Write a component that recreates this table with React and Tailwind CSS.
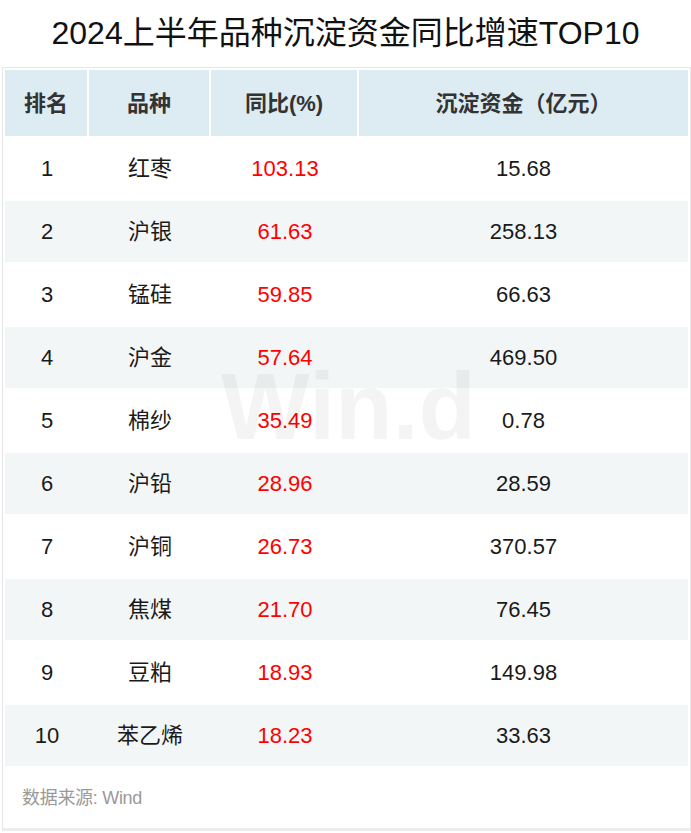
import React from 'react';

// 2024上半年品种沉淀资金同比增速TOP10
const rows = [
  { rank: 1, name: '红枣', yoy: '103.13', fund: '15.68' },
  { rank: 2, name: '沪银', yoy: '61.63', fund: '258.13' },
  { rank: 3, name: '锰硅', yoy: '59.85', fund: '66.63' },
  { rank: 4, name: '沪金', yoy: '57.64', fund: '469.50' },
  { rank: 5, name: '棉纱', yoy: '35.49', fund: '0.78' },
  { rank: 6, name: '沪铅', yoy: '28.96', fund: '28.59' },
  { rank: 7, name: '沪铜', yoy: '26.73', fund: '370.57' },
  { rank: 8, name: '焦煤', yoy: '21.70', fund: '76.45' },
  { rank: 9, name: '豆粕', yoy: '18.93', fund: '149.98' },
  { rank: 10, name: '苯乙烯', yoy: '18.23', fund: '33.63' },
];

const font = { fontFamily: '"Liberation Sans", "Noto Sans CJK SC", sans-serif' };

const App = () => {
  return (
    <div className="w-[691px] h-[833px] bg-white overflow-hidden" style={font}>
      <h1 className="h-[67px] pb-[1px] flex items-center justify-center text-[32px] font-normal text-[#111]">
        2024上半年品种沉淀资金同比增速TOP10
      </h1>

      <div className="relative ml-[2px] w-[689px] border border-[#e6e6e6] border-b-[3px] border-b-[#ececec]">
        <div className="px-[2px]">
          <table className="table-fixed w-full border-separate border-spacing-x-0 border-spacing-y-[2px]">
            <colgroup>
              <col className="w-[84px]" />
              <col className="w-[122px]" />
              <col className="w-[148px]" />
              <col />
            </colgroup>
            <thead>
              <tr className="h-[66px]">
                <th className="bg-[#ddebf2] border-r-2 border-white text-[22px] font-semibold text-[#333] text-center">排名</th>
                <th className="bg-[#ddebf2] border-r-2 border-white text-[22px] font-semibold text-[#333] text-center">品种</th>
                <th className="bg-[#ddebf2] border-r-2 border-white text-[22px] font-semibold text-[#333] text-center">同比(%)</th>
                <th className="bg-[#ddebf2] text-[22px] font-semibold text-[#333] text-center">沉淀资金（亿元）</th>
              </tr>
            </thead>
            <tbody>
              {rows.map((r, i) => (
                <tr key={r.rank} className={`h-[61px] ${i % 2 === 1 ? 'bg-[#f3f6f7]' : 'bg-white'}`}>
                  <td className="text-center text-[22px] text-[#1a1a1a]">{r.rank}</td>
                  <td className="text-center text-[22px] text-[#1a1a1a]">{r.name}</td>
                  <td className="text-center text-[22px] text-[#ff0000]">{r.yoy}</td>
                  <td className="text-center text-[22px] text-[#1a1a1a]">{r.fund}</td>
                </tr>
              ))}
            </tbody>
          </table>
        </div>

        <div className="h-[60px] pl-[19px] flex items-center text-[18px] text-[#999] tracking-[-0.3px]">
          数据来源: Wind
        </div>

        {/* watermark */}
        <div className="absolute left-[218px] top-[292px] text-[94px] leading-none font-bold text-black/[0.045] pointer-events-none select-none">
          Win.d
        </div>
      </div>
    </div>
  );
};

export default App;
